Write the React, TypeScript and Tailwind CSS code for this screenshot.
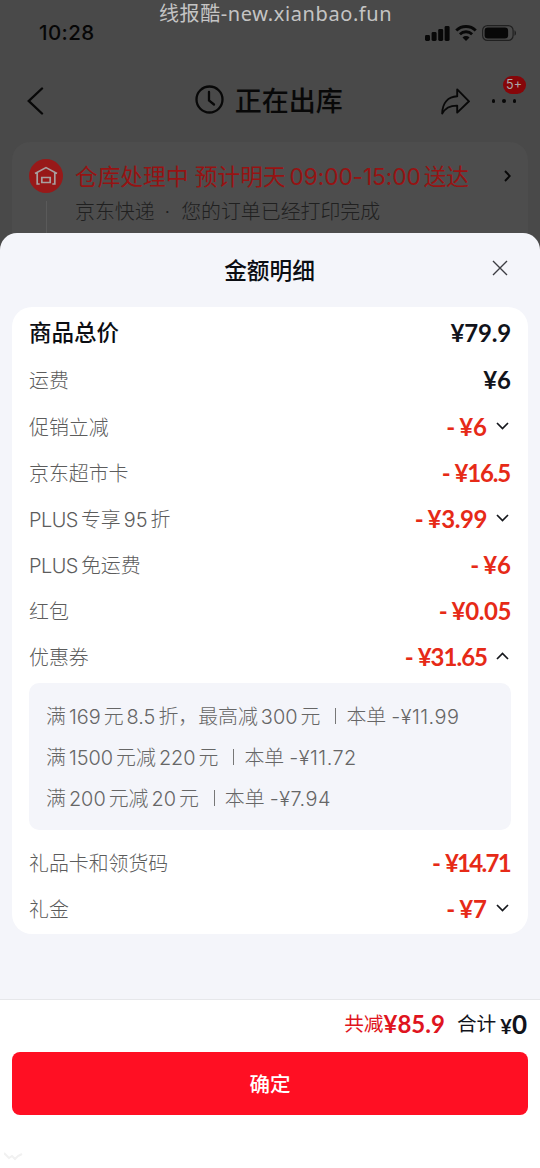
import { clsx } from "clsx";

type Row = {
  label: string;
  amount: string;
  minus?: boolean;
  arrow?: "up" | "down";
  className?: string;
  tracking?: string;
};

const rows: Row[] = [
  { label: "商品总价", amount: "79.9", className: "h-[46px]", tracking: "tracking-[-0.2px]" },
  { label: "运费", amount: "6", className: "h-12" },
  { label: "促销立减", amount: "6", minus: true, arrow: "down" },
  { label: "京东超市卡", amount: "16.5", minus: true, tracking: "tracking-[-1.2px] mr-px" },
  { label: "PLUS专享95折", amount: "3.99", minus: true, arrow: "down", tracking: "tracking-[-0.4px]" },
  { label: "PLUS免运费", amount: "6", minus: true },
  { label: "红包", amount: "0.05", minus: true, tracking: "tracking-[-0.4px]" },
  { label: "优惠券", amount: "31.65", minus: true, arrow: "up", tracking: "tracking-[-1px]" },
];

const coupons = [
  { rule: "满169元8.5折，最高减300元", amount: "-¥11.99" },
  { rule: "满1500元减220元", amount: "-¥11.72" },
  { rule: "满200元减20元", amount: "-¥7.94" },
];

const giftRows: Row[] = [
  { label: "礼品卡和领货码", amount: "14.71", minus: true, tracking: "tracking-[-1.7px] mr-px" },
  { label: "礼金", amount: "7", minus: true, arrow: "down" },
];

// Adds a little air between latin and chinese runs
function Mixed({ text }: { text: string }) {
  const parts = text.match(/[\x20-\x7e¥]+|[^\x20-\x7e¥]+/g) ?? [];
  return (
    <>
      {parts.map((part, i) => (
        <span key={i} className={clsx(i > 0 && "ml-[3px]", /^[A-Z]/.test(part) && "tracking-[-0.5px]")}>
          {part}
        </span>
      ))}
    </>
  );
}

function Arrow({ up }: { up?: boolean }) {
  return (
    <svg width="13" height="8" viewBox="0 0 13 8" fill="none" className="ml-[9px] mr-0.5 mb-px">
      <path d={up ? "M1 7l5.5-5.5L12 7" : "M1 1l5.5 5.5L12 1"} stroke="#15171c" strokeWidth="1.7" />
    </svg>
  );
}

function DetailRow({ row }: { row: Row }) {
  const total = row.label === "商品总价";
  return (
    <div className={clsx("flex items-center justify-between", row.className ?? "h-[46px]")}>
      <span
        className={clsx(
          "whitespace-nowrap",
          total ? "text-[22.5px] font-medium text-[#0b0d12]" : "pt-[3px] text-[19.9px] font-light text-[#5c5c5c]"
        )}
      >
        <Mixed text={row.label} />
      </span>
      <div
        className={clsx(
          "flex items-center pb-px font-['Lato',sans-serif] text-[24px] font-bold leading-none",
          row.minus ? "text-[#e62a17]" : "text-[#11131b]"
        )}
      >
        {row.minus && <span className="mr-1">-</span>}
        <span className={row.tracking}>¥{row.amount}</span>
        {row.arrow && <Arrow up={row.arrow === "up"} />}
      </div>
    </div>
  );
}

function StatusBar() {
  return (
    <div className="flex h-[65px] items-center justify-between pl-[39px] pr-[23px]">
      <span className="pt-0.5 text-[20.5px] font-medium leading-none tracking-[0.4px] text-[#070707]">10:28</span>
      <div className="flex items-center text-[#080808]">
        <svg width="25" height="16" viewBox="0 0 25 16" fill="currentColor">
          <rect x="0" y="10" width="5" height="6" rx="1.4" />
          <rect x="6.6" y="7" width="5" height="9" rx="1.4" />
          <rect x="13.2" y="4" width="5" height="12" rx="1.4" />
          <rect x="19.6" y="1" width="5" height="15" rx="1.4" />
        </svg>
        <svg width="22" height="16" viewBox="0 0 22 16" fill="none" stroke="currentColor" className="ml-[5px]">
          <path d="M1.3 5.5a14 14 0 0 1 19.4 0" strokeWidth="3" />
          <path d="M4.9 9.2a8.8 8.8 0 0 1 12.2 0" strokeWidth="2.8" />
          <path d="M11 16l-3.5-3.5a5 5 0 0 1 7 0z" fill="currentColor" stroke="none" />
        </svg>
        <svg width="35" height="16" viewBox="0 0 35 16" className="ml-[5px]">
          <rect x="0.6" y="0.6" width="30.5" height="14.8" rx="4.8" fill="none" stroke="#202020" strokeWidth="1.2" />
          <rect x="2.6" y="2.5" width="23.5" height="11" rx="3.2" fill="currentColor" />
          <path d="M32.5 5.2c2 1 2 4.6 0 5.6z" fill="#202020" />
        </svg>
      </div>
    </div>
  );
}

function NavBar() {
  return (
    <div className="flex h-[72px] items-center justify-between pl-[27px] pr-6 text-[#080808]">
      <svg width="17" height="28" viewBox="0 0 17 28" fill="none" stroke="currentColor" strokeWidth="2.4" strokeLinecap="round">
        <path d="M15 1.5L1.8 14 15 26.5" />
      </svg>
      <div className="ml-[53px] flex items-center gap-[11px]">
        <svg width="29" height="29" viewBox="0 0 29 29" fill="none" stroke="currentColor" strokeWidth="2.3" className="-mt-1">
          <circle cx="14.5" cy="14.5" r="13" />
          <path d="M14 7v8.5l5 4" strokeLinecap="round" />
        </svg>
        <h1 className="text-[27px] font-medium leading-none">正在出库</h1>
      </div>
      <div className="flex items-center">
        <svg width="29" height="27" viewBox="0 0 29 27" fill="none" stroke="currentColor" strokeWidth="1.9" strokeLinejoin="round">
          <path d="M16.2 1.4L28 13.3 16.2 24.6v-7C9 17.5 4.5 19.5 1.2 25.5 1.5 15 7 8.600 16.2 8.2z" />
        </svg>
        <div className="relative ml-[22px] flex gap-[7px]">
          <i className="size-[3.5px] rounded-full bg-current" />
          <i className="size-[3.5px] rounded-full bg-current" />
          <i className="size-[3.5px] rounded-full bg-current" />
          <span className="absolute -top-[23px] left-[11px] flex h-[18px] w-[23px] items-center justify-center rounded-full bg-[#860609] text-[12.5px] text-[#aaa]">
            5+
          </span>
        </div>
      </div>
    </div>
  );
}

function DeliveryCard() {
  return (
    <div className="mx-3 mt-[5px] flex h-[110px] rounded-[18px] bg-[#4d4d4d] px-[17px]">
      <div className="flex w-[34px] flex-col items-center pt-[17px]">
        <div className="flex size-[34px] shrink-0 items-center justify-center rounded-full bg-[#981919]">
          <svg width="24" height="20" viewBox="0 0 24 20" fill="none" stroke="#a8a0a0" strokeWidth="1.7">
            <path d="M1 7.5L12 1.6l11 5.9M3.2 6.8V18h2.5M20.8 6.8V18h-2.5M7.8 11.5h8.4V16.5H7.8z" />
          </svg>
        </div>
        <div className="mt-2 w-px flex-1 bg-[#5a5a5a]" />
      </div>
      <div className="ml-3 flex flex-1 flex-col whitespace-nowrap pt-[17px]">
        <div className="flex h-[34px] items-center justify-between">
          <span className="pt-0.5 text-[22.7px] text-[#961313]">
            仓库处理中 预计明天<span className="ml-1 tracking-[-0.1px]">09:00-15:00</span>
            <span className="ml-[3px]">送达</span>
          </span>
          <svg width="7" height="12" viewBox="0 0 7 12" fill="none" stroke="#080808" strokeWidth="1.9">
            <path d="M1 1l4.8 5L1 11" />
          </svg>
        </div>
        <p className="mt-1 flex h-8 items-center text-[19.9px] font-light text-[#202020]">
          京东快递<span className="ml-[10px] mr-[11px]">·</span>您的订单已经打印完成
        </p>
      </div>
    </div>
  );
}

export default function App() {
  return (
    <div className="relative flex h-[1168px] w-[540px] flex-col overflow-hidden bg-[#494949] font-['Inter','Noto_Sans_CJK_SC',sans-serif]">
      <div className="h-[233px]">
        <StatusBar />
        <NavBar />
        <DeliveryCard />
      </div>
      <div className="absolute left-[159px] top-0 whitespace-nowrap font-['Noto_Sans','Noto_Sans_CJK_SC',sans-serif] text-[20px] leading-[27px] tracking-[0.6px] text-[#c4c4c4]">
        线报酷-new.xianbao.fun
      </div>

      {/* Bottom sheet */}
      <section className="z-10 flex flex-1 flex-col rounded-t-[17px] bg-[#f4f5fa]">
        <header className="flex h-[74px] items-center justify-between px-8">
          <span className="w-[15px]" />
          <h2 className="pt-0.5 text-[22.7px] font-medium text-[#0b0d12]">金额明细</h2>
          <svg width="16" height="16" viewBox="0 0 16 16" stroke="#3c3d42" strokeWidth="1.4" className="-mt-1">
            <path d="M1 1l14 14M15 1L1 15" />
          </svg>
        </header>

        <div className="mx-3 h-[627px] rounded-[20px] bg-white px-[17px] pt-[3px]">
          {rows.map((row) => (
            <DetailRow key={row.label} row={row} />
          ))}
          <div className="mb-2.5 mt-[3px] h-[147px] rounded-[10px] bg-[#f4f5fa] px-[17px] pt-3.5">
            {coupons.map((c) => (
              <div
                key={c.rule}
                className="flex h-[41px] items-center whitespace-nowrap text-[19.9px] font-light text-[#666]"
              >
                <Mixed text={c.rule} />
                <i className="mb-1 ml-[15px] mr-[10px] h-4 w-px bg-[#777]" />
                <span>本单</span>
                <span className="ml-[5px] tracking-[0.5px]">{c.amount}</span>
              </div>
            ))}
          </div>
          {giftRows.map((row) => (
            <DetailRow key={row.label} row={row} />
          ))}
        </div>

        <footer className="mt-[65px] flex-1 border-t border-[#e6e7ea] bg-white px-3">
          <div className="flex h-[52px] items-center justify-end pb-1 pr-px">
            <span className="pt-0.5 text-[19.7px] text-[#df1420]">共减</span>
            <span className="font-['Lato',sans-serif] text-[24px] font-bold text-[#df1420]">¥85.9</span>
            <span className="ml-3 pt-0.5 text-[19.7px] text-[#11131b]">合计</span>
            <span className="ml-1 font-['Lato',sans-serif] text-[20px] font-bold text-[#11131b]">
              ¥<span className="text-[26px]">0</span>
            </span>
          </div>
          <button className="flex h-[63px] w-full items-center justify-center rounded-lg bg-[#ff0f23] pt-[3px] text-[20.5px] font-medium text-white">
            确定
          </button>
          <svg width="20" height="10" viewBox="0 0 20 10" fill="none" stroke="#f1f1f1" strokeWidth="2" className="-ml-2 mt-[36px]">
            <path d="M0 2l5 5 3-2 3 3 3-3 4-2" />
          </svg>
        </footer>
      </section>
    </div>
  );
}
